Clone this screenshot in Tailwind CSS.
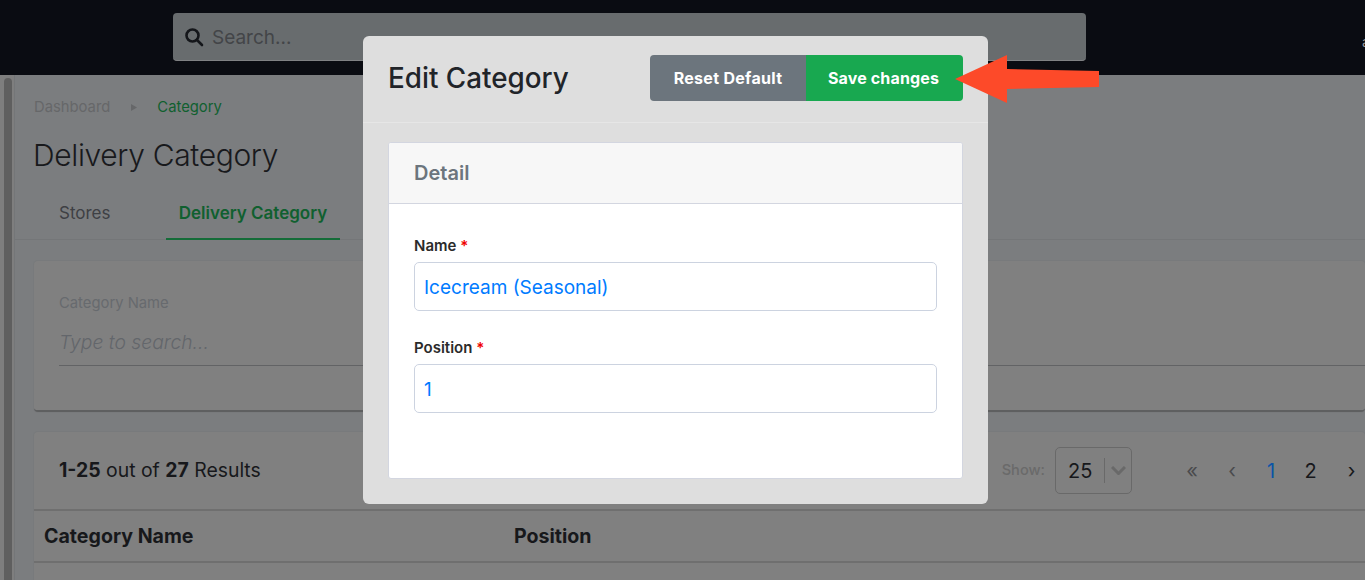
<!DOCTYPE html>
<html><head><meta charset="utf-8"><script src="https://cdn.jsdelivr.net/npm/@tailwindcss/browser@4"></script></head>
<body class="m-0 w-[1365px] h-[580px] overflow-hidden relative bg-[#7b7d7f] font-['Inter',sans-serif] antialiased">
<header class="h-[75px] bg-[#0a0c12] relative flex items-start pl-[173px] pt-[13px]">
  <div class="w-[913px] h-[48px] bg-[#686c6e] rounded-[4px] border-b border-[#808284] flex items-center pl-[11px] gap-[8px]">
    <svg width="20" height="20" viewBox="0 0 20 20" fill="none" stroke="#14161a" stroke-width="2.6"><circle cx="8.5" cy="8.5" r="6"/><path d="M13 13l5 5" stroke-linecap="round"/></svg>
    <span class="text-[19px] pt-[3px] text-[#434548]">Search...</span>
  </div>
  <span class="absolute left-[1362px] top-[31px] text-[14px] text-[#9a9a9a]">a</span>
</header>
<div class="flex h-[505px]">
  <div class="w-[15px] shrink-0 bg-[#7e7e7e] border-r border-[#747678] pl-[4px] pt-[3px]"><div class="w-[8px] h-full rounded-t-[4px] bg-[#5f5f5f]"></div></div>
  <main class="flex-1 min-w-0">
    <nav class="pl-[19px] pt-[23px] flex items-center h-[41px] text-[14.8px] leading-[17px]">
      <span class="text-[#666769]">Dashboard</span>
      <svg class="ml-[21px]" width="6" height="7" viewBox="0 0 6 7"><path d="M0 0l6 3.5L0 7z" fill="#666769"/></svg>
      <span class="ml-[20px] text-[#10602f]">Category</span>
    </nav>
    <h1 class="pl-[18px] mt-[21px] text-[30px] leading-[36px] font-light tracking-[-0.35px] text-[#18191c]">Delivery Category</h1>
    <div class="mt-[18px] h-[49px] border-b border-[#747678] flex pl-[19px] text-[17px] box-border">
      <span class="w-[132px] pl-[25px] pt-[12px] text-[#3e4044] leading-[21px]">Stores</span>
      <span class="w-[174px] h-[49px] text-center pt-[12px] leading-[21px] font-semibold text-[#10602f] border-b-[2px] border-[#146c38]">Delivery Category</span>
    </div>
    <section class="mt-[21px] ml-[19px] h-[151px] bg-[#808080] rounded-[4px] border-b-[2px] border-[#5e5f60] shadow-[0_0_0_1px_#787a7c] pl-[25px] pt-[34px]">
      <div class="text-[14.8px] leading-[17px] text-[#676a6e]">Category Name</div>
      <div class="mt-[14px] h-[40px] border-b border-[#626365] text-[19.300px] leading-[24px] pt-[4px] italic font-light text-[#63666b]">Type to search...</div>
    </section>
    <section class="mt-[20px] ml-[19px] bg-[#808080] shadow-[0_0_0_1px_#787a7c] rounded-t-[4px] h-[150px]">
      <div class="h-[79px] flex items-center pl-[25px] border-b-[2px] border-[#6f6f6f] box-border">
        <span class="shrink-0 text-[19.400px] text-[#17181b]"><b class="font-bold">1-25</b> out of <b class="font-bold">27</b> Results</span>
        <span class="ml-auto shrink-0 text-[14.600px] font-medium text-[#6a6a6a]">Show:</span>
        <div class="ml-[10px] shrink-0 w-[77px] h-[47px] border border-[#696969] rounded-[5px] flex items-center pl-[12px] text-[20px] text-[#17181b]">25
          <span class="ml-[12px] w-px h-[25px] bg-[#696969]"></span>
          <svg class="ml-[6px]" width="15" height="9" viewBox="0 0 15 9" fill="none" stroke="#696969" stroke-width="3"><path d="M1 1l6.500 6.500L14 1"/></svg>
        </div>
        <div class="ml-[40px] mr-[-7px] shrink-0 w-[200px] flex items-center text-[20px] h-[30px]">
          <span class="w-[40px] text-[#4a4b4d] text-center">«</span>
          <span class="w-[40px] text-[#4a4b4d] text-center">‹</span>
          <span class="w-[38px] text-[#0a54a8] text-center">1</span>
          <span class="w-[41px] text-[#17181b] text-center">2</span>
          <span class="w-[41px] text-[#17181b] text-center">›</span>
        </div>
      </div>
      <div class="h-[52px] flex items-center border-b-[2px] border-[#6f6f6f] pl-[10px] pt-[2px] text-[19.600px] font-bold text-[#17181b] box-border">
        <span class="w-[470px]">Category Name</span><span>Position</span>
      </div>
    </section>
  </main>
</div>

<div class="absolute left-[363px] top-[36px] w-[625px] h-[468px] bg-[#dedede] rounded-[6px]">
  <div class="h-[87px] border-b border-[#e6e6e6] flex items-start pt-[19px] pl-[25px] pr-[25px]">
    <h2 class="text-[27.800px] leading-[47px] font-medium text-[#212429]">Edit Category</h2>
    <div class="ml-auto flex h-[46px] text-[16px] leading-[47px] tracking-[0.3px] font-bold text-white">
      <span class="w-[156px] bg-[#6c757d] rounded-l-[4px] text-center">Reset Default</span>
      <span class="w-[157px] bg-[#18a850] rounded-r-[4px] text-center tracking-[0.15px] pr-[2px]">Save changes</span>
    </div>
  </div>
  <div class="mx-[25px] mt-[19px] h-[337px] bg-white rounded-[3px] border border-[#d3d6e0] overflow-hidden">
    <div class="h-[61px] bg-[#f7f7f7] border-b border-[#d3d6e0] pl-[25px] flex items-center text-[20px] font-semibold text-[#6c757d]">Detail</div>
    <div class="px-[25px] pt-[33px]">
      <label class="block text-[15px] leading-[17px] font-semibold text-[#2b2b2b]">Name <span class="text-[#f00000]">*</span></label>
      <div class="mt-[8px] h-[49px] border border-[#ccd3e0] rounded-[5px] pl-[9px] pt-[3px] flex items-center text-[19px] text-[#007bff]">Icecream (Seasonal)</div>
      <label class="mt-[28px] block text-[15px] leading-[17px] font-semibold text-[#2b2b2b]">Position <span class="text-[#f00000]">*</span></label>
      <div class="mt-[8px] h-[49px] border border-[#ccd3e0] rounded-[5px] pl-[9px] pt-[3px] flex items-center text-[19px] text-[#007bff]">1</div>
    </div>
  </div>
</div>

<svg class="absolute left-0 top-0 pointer-events-none" width="1365" height="580"><polygon points="955,79 1007,55 1007,69 1099,71 1099,87 1007,89 1007,103" fill="#fd4a29"/></svg>
</body></html>
